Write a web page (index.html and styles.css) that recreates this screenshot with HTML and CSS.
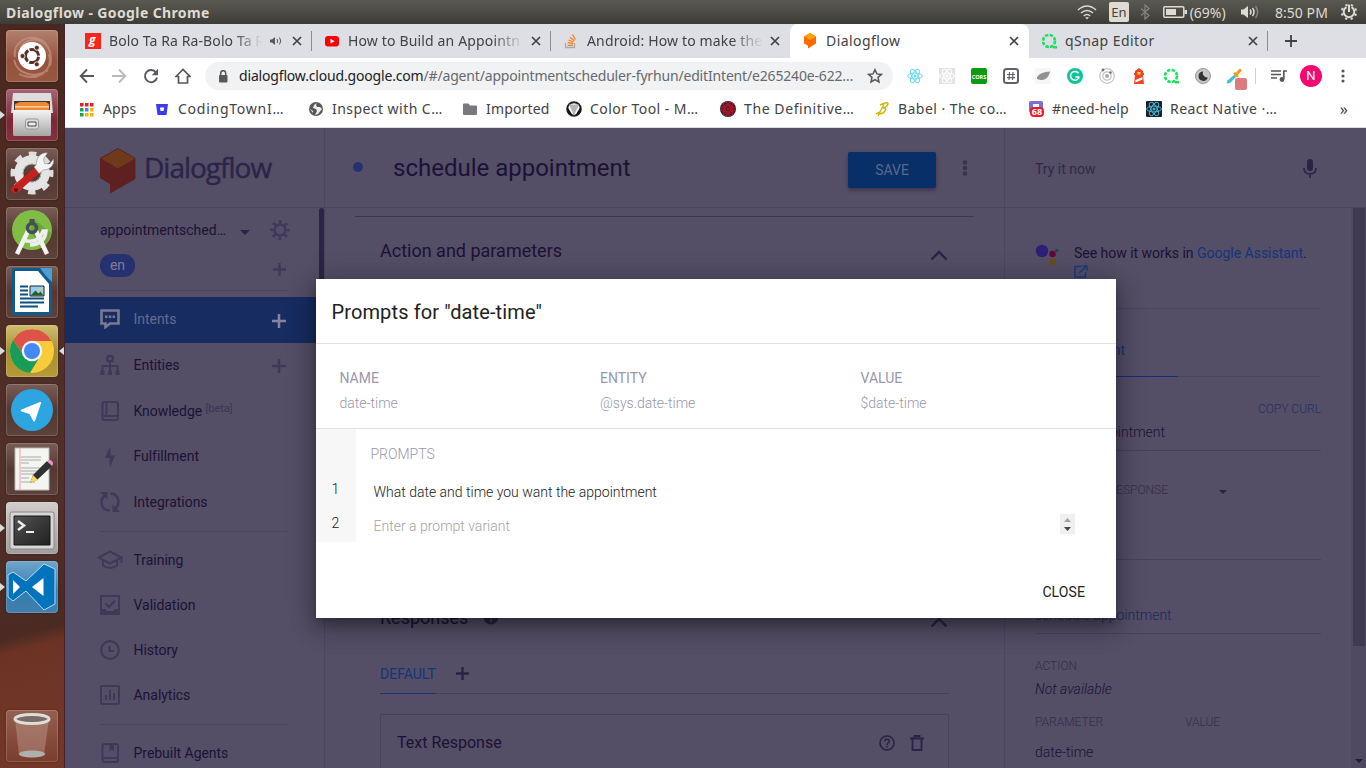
FILE: index.html
```html
<!DOCTYPE html>
<html lang="en">
<head>
<meta charset="utf-8">
<title>Dialogflow</title>
<link rel="stylesheet" href="styles.css">
</head>
<body>
<svg width="0" height="0" class="defs">
  <defs>
    <linearGradient id="metal" x1="0" y1="0" x2="0" y2="1"><stop offset="0" stop-color="#f4f4f4"/><stop offset="1" stop-color="#a5a5a5"/></linearGradient>
    <linearGradient id="screen" x1="0" y1="0" x2="1" y2="1"><stop offset="0" stop-color="#555"/><stop offset=".5" stop-color="#383838"/><stop offset="1" stop-color="#222"/></linearGradient>
    <symbol id="x" viewBox="0 0 10 10"><path d="M1 1l8 8M9 1L1 9" stroke="#3f4246" stroke-width="1.7" fill="none"/></symbol>
    <symbol id="react" viewBox="0 0 16 16"><g fill="none" stroke="currentColor" stroke-width="1"><ellipse cx="8" cy="8" rx="7.4" ry="2.9"/><ellipse cx="8" cy="8" rx="7.4" ry="2.9" transform="rotate(60 8 8)"/><ellipse cx="8" cy="8" rx="7.4" ry="2.9" transform="rotate(120 8 8)"/></g><circle cx="8" cy="8" r="1.5" fill="currentColor"/></symbol>
    <symbol id="qsnap" viewBox="0 0 16 16"><circle cx="8" cy="8" r="6" fill="none" stroke="#1ee05f" stroke-width="2.600" stroke-dasharray="3.400 1.300"/><path d="M11 13h5v2.500h-4z" fill="#1ee05f"/></symbol>
    <symbol id="plus" viewBox="0 0 14 14"><path d="M7 0v14M0 7h14" stroke="currentColor" stroke-width="2.500"/></symbol>
    <symbol id="chev" viewBox="0 0 18 11"><path d="M1.500 9.500L9 2l7.500 7.500" fill="none" stroke="currentColor" stroke-width="2.400"/></symbol>
  </defs>
</svg>

<header class="panel">
  <span class="panel-title">Dialogflow - Google Chrome</span>
  <div class="indicators">
    <svg class="i-wifi" width="20" height="16" viewBox="0 0 20 16" fill="none" stroke="#dfdbd2" stroke-width="1.600"><path d="M1 6Q10-2 19 6M4 9q6-5 12 0M6.800 11.800q3.200-2.600 6.400 0"/><path d="M8 13.200h4l-2 2.300z" fill="#dfdbd2" stroke="none"/></svg>
    <span class="lang">En</span>
    <svg class="i-bt" width="10" height="16" viewBox="0 0 10 16" fill="none" stroke="#85837b" stroke-width="1.300"><path d="M1 4.500l8 7-4 3.500V1l4 3.500-8 7"/></svg>
    <svg class="i-bat" width="24" height="14" viewBox="0 0 24 14"><rect x=".8" y="1.800" width="20" height="10.400" rx="1" fill="none" stroke="#dfdbd2" stroke-width="1.500"/><path d="M3 4h10v6H3zM21.500 5H24v4h-2.500z" fill="#dfdbd2"/></svg>
    <span class="bat">(69%)</span>
    <svg class="i-vol" width="20" height="16" viewBox="0 0 20 16"><path d="M1 5.500h2.500L8 2v12l-4.500-3.500H1z" fill="#dfdbd2"/><path d="M10 5.500q2 2.500 0 5M12.500 4q3 4 0 8" fill="none" stroke="#dfdbd2" stroke-width="1.500"/><path d="M15.500 2q4.300 6 0 12" fill="none" stroke="#85837b" stroke-width="1.500"/></svg>
    <span class="clock">8:50 PM</span>
    <svg class="i-gear" width="18" height="18" viewBox="0 0 18 18" fill="none" stroke="#dfdbd2"><path d="M11.500 4.200a5.300 5.300 0 1 1-5 0M9 1.500V9" stroke-width="2"/><circle cx="9" cy="9" r="7.200" stroke-width="2" stroke-dasharray="2.200 3.450" stroke-dashoffset="3.900"/></svg>
  </div>
</header>

<div class="desktop">
  <nav class="launcher">
    <div class="tile t-dash"><svg width="52" height="52" viewBox="0 0 52 52"><g fill="none" stroke="#c89582" opacity=".7"><path d="M9 27C6 8 30 2 40 14M43 24c5 20-16 28-30 20M14 18C24 2 50 10 44 36M8 30c4 16 22 18 34 10" stroke-width="2"/></g><circle cx="26" cy="26" r="14" fill="#fff"/><circle cx="26" cy="26" r="6.600" fill="none" stroke="#5a3024" stroke-width="3" stroke-dasharray="12.300 1.520" stroke-dashoffset="-.8"/><g fill="#5a3024" stroke="#fff" stroke-width=".8"><circle cx="16.500" cy="26" r="2.500"/><circle cx="30.800" cy="17.700" r="2.500"/><circle cx="30.800" cy="34.300" r="2.500"/></g></svg></div>
    <div class="tile t-files run"><svg width="52" height="52" viewBox="0 0 52 52"><path d="M7 4h38l2 20H5z" fill="#ddd"/><path d="M8 12h36v12H8z" fill="#3c3935"/><path d="M9 15l5-2h26l3 2v8H9z" fill="#ed8735"/><path d="M9 17h34v1.500H9z" fill="#ffd39c"/><rect x="7" y="21" width="38" height="26" rx="1.500" fill="url(#metal)"/><rect x="19.500" y="30" width="13" height="10" rx="2" fill="#ddd" stroke="#969696"/><path d="M22 33h8v4h-8z" fill="#eee" stroke="#444"/></svg></div>
    <div class="tile"><svg width="52" height="52" viewBox="0 0 52 52"><circle cx="26" cy="25" r="19" fill="none" stroke="#dedede" stroke-width="5" stroke-dasharray="7.500 7.420" stroke-dashoffset="3.700"/><circle cx="26" cy="25" r="13.500" fill="none" stroke="#e4e4e4" stroke-width="8.500"/><circle cx="26" cy="25" r="9" fill="none" stroke="#b4b4b4"/><path d="M6.500 44q-3-3 1-6.500L28 20l5 5.500L12 44q-3 2.500-5.500 0z" fill="#c4221f"/><path d="M28 19c3-2 2-4 3-7 1.500-5 6-8 10.500-7l-4 6 1 4.500 5 .5 4-5c1.500 6-4 11-10 11l-4.500 3.500z" fill="#f4f4f4" stroke="#888" stroke-width=".6"/><circle cx="10" cy="42" r="2" fill="#681313"/></svg></div>
    <div class="tile"><svg width="52" height="52" viewBox="0 0 52 52"><circle cx="26" cy="23" r="20" fill="#80bd45"/><path d="M28 12l17 14q-2 10-10 14L24 24z" fill="#6ba43b"/><path d="M22 24L11 47M30 24l11 23" stroke="#f3f3f3" stroke-width="4.500"/><path d="M17 33q15 5 20-9h3q-1 13-16 14" fill="none" stroke="#eee" stroke-width="3.500"/><circle cx="26" cy="21" r="4.500" fill="none" stroke="#455056" stroke-width="3.500"/><path d="M23.500 12h5v5h-5z" fill="#455056"/></svg></div>
    <div class="tile"><svg width="52" height="52" viewBox="0 0 52 52"><path d="M8 2h28l10 11v33q0 3-3 3H9q-3 0-3-3V4q0-2 2-2z" fill="#0f5a8f"/><path d="M34 2h12v14q-6-5-12-14z" fill="#4c9fd2"/><path d="M9 5h23l11 13v28H9z" fill="#fff"/><path d="M14 20.500h8M14 24.500h8M14 28.500h8M14 32.500h24M14 36.500h24M14 40.500h18" stroke="#0d4f80" stroke-width="1.800"/><path d="M24 20h14v10H24z" fill="#8fd0f2" stroke="#222"/><path d="M24.500 29.500l5-5 3 3 2-2 3 4z" fill="#315a2c"/><circle cx="34" cy="23" r="1.500" fill="#f5c542"/></svg></div>
    <div class="tile t-chrome run act"><svg width="52" height="52" viewBox="0 0 52 52"><circle cx="26" cy="26" r="22" fill="#f9cb38"/><path d="M7 15A22 22 0 0 1 45.500 16H26l-9 13z" fill="#dd5347"/><path d="M7 15a22 22 0 0 0 17 33l9-15-7 3-9-7z" fill="#179d58"/><circle cx="26" cy="26" r="10.300" fill="#f4f4f4"/><circle cx="26" cy="26" r="8" fill="#4488f4"/></svg></div>
    <div class="tile"><svg width="52" height="52" viewBox="0 0 52 52"><circle cx="26" cy="26" r="21" fill="#2ca5e0"/><path d="M15.500 25.500L34 18q1.500-.3 1 1.300L29 37q-.8 1.300-1.800 0L23.500 30l-8-2.500q-1.500-1 0-2z" fill="#fff"/></svg></div>
    <div class="tile"><svg width="52" height="52" viewBox="0 0 52 52"><path d="M9 5h34v42H9z" fill="#f4f4f1" stroke="#bbb"/><path d="M15 14h20M15 17h20M15 20h8M15 25h21M15 28h21M15 31h18M15 35h8M15 39h14" stroke="#aaa"/><path d="M14 5v42" stroke="#f0a0a0"/><path d="M24 40l3-8 14-14 5 5-15 14z" fill="#303030"/><path d="M24 40l3-8 5 5z" fill="#f2dc58"/><path d="M41 18l2-1q4 0 4 4l-1 2z" fill="#e895c5"/></svg></div>
    <div class="tile t-term run"><svg width="52" height="52" viewBox="0 0 52 52"><rect x="4" y="10" width="44" height="37" rx="2" fill="#d7d7d7" stroke="#888"/><path d="M8 14h36v29H8z" fill="url(#screen)" stroke="#171717"/><path d="M12 19l6 4.500-6 4.500" fill="none" stroke="#eee" stroke-width="2.500"/><path d="M20 30h8" stroke="#eee" stroke-width="2"/></svg></div>
    <div class="tile t-code run"><svg width="52" height="52" viewBox="0 0 52 52"><path d="M2 14l5-3 13 9L38 3l11 5v35l-11 6-18-19-13 10-5-4z" fill="#0073bd" stroke="#b9daf0"/><path d="M7 19l7 7-7 7zM37.500 17v18L26 26z" fill="#fff"/></svg></div>
    <div class="tile t-trash"><svg width="52" height="52" viewBox="0 0 52 52"><path d="M9 9h34l-5 36q-12 5-25 0z" fill="#c9a79c" opacity=".4"/><ellipse cx="26" cy="9" rx="17" ry="4.500" fill="#7a6b66" stroke="#deded9" stroke-width="3"/><ellipse cx="26" cy="44" rx="13" ry="3.500" fill="#aeb0ab"/></svg></div>
  </nav>

  <div class="browser">
    <div class="tabs">
      <div class="tab"><svg width="16" height="16" viewBox="0 0 16 16"><path d="M0 0h16v16H0z" fill="#f8251a"/><text x="4" y="11" class="gaana">g</text></svg><span class="tt fade short">Bolo Ta Ra Ra-Bolo Ta R</span><svg class="snd" width="12" height="10" viewBox="0 0 12 10"><path d="M0 3.500h2L5 1v8L2 6.500H0z" fill="#55585c"/><path d="M7 3q1.500 2 0 4M9.500 1.500q2.500 3.500 0 7" fill="none" stroke="#55585c"/></svg><svg class="x" width="10" height="10"><use href="#x"/></svg></div>
      <div class="tab"><svg width="16" height="16" viewBox="0 0 16 16"><rect x="1" y="3" width="14" height="10.500" rx="3" fill="#f00"/><path d="M6.500 5.800l4 2.400-4 2.400z" fill="#fff"/></svg><span class="tt fade">How to Build an Appointn</span><svg class="x" width="10" height="10"><use href="#x"/></svg></div>
      <div class="tab nosep"><svg width="16" height="16" viewBox="0 0 16 16" fill="none"><path d="M2.500 10v4.500h9V10" stroke="#aaa" stroke-width="1.300"/><path d="M4.500 12.300h5.500M4.700 9.700l5.500.8M5.500 7l5.200 2M7 4.200l4.500 3.500M9.500 1.500l3 5" stroke="#f48024" stroke-width="1.300"/></svg><span class="tt fade">Android: How to make the</span><svg class="x" width="10" height="10"><use href="#x"/></svg></div>
      <div class="tab active"><svg width="16" height="16" viewBox="0 0 16 16"><path d="M8 0l6 3.500v7L6 15.500V12.800L2 10.500v-7z" fill="#ff6a00"/><path d="M8 0l6 3.500L8 7 2 3.500z" fill="#ffa000"/></svg><span class="tt wide">Dialogflow</span><svg class="x" width="10" height="10"><use href="#x"/></svg></div>
      <div class="tab"><svg width="16" height="16"><use href="#qsnap"/></svg><span class="tt wide">qSnap Editor</span><svg class="x" width="10" height="10"><use href="#x"/></svg></div>
      <svg class="newtab" width="12" height="12" viewBox="0 0 12 12"><path d="M6 0v12M0 6h12" stroke="#3f4246" stroke-width="1.800"/></svg>
    </div>

    <div class="toolbar">
      <div class="navbtns">
        <svg width="16" height="16" viewBox="0 0 16 16" fill="none" stroke="#55585c" stroke-width="1.900"><path d="M15 8H2M8 1.500L1.700 8 8 14.500"/></svg>
        <svg width="16" height="16" viewBox="0 0 16 16" fill="none" stroke="#b9bbbd" stroke-width="1.900"><path d="M1 8h13M8 1.500L14.300 8 8 14.500"/></svg>
        <svg width="16" height="16" viewBox="0 0 16 16"><path d="M13 4.500A6.100 6.100 0 1 0 14 9.500" fill="none" stroke="#55585c" stroke-width="1.900"/><path d="M15 .8v6.400H8.800z" fill="#55585c"/></svg>
        <svg width="16" height="16" viewBox="0 0 16 16"><path d="M1 8.500L8 1.500l7 7h-2.500V15h-9V8.500z" fill="none" stroke="#55585c" stroke-width="1.700"/></svg>
      </div>
      <div class="omni">
        <svg width="10" height="13" viewBox="0 0 10 13"><rect x="1" y="5" width="8.500" height="7.500" rx="1" fill="#55585c"/><path d="M2.700 5V3.200a2.500 2.500 0 0 1 5 0V5" fill="none" stroke="#55585c" stroke-width="1.500"/></svg>
        <span class="url"><b>dialogflow.cloud.google.com</b>/#/agent/appointmentscheduler-fyrhun/editIntent/e265240e-622…</span>
        <svg width="16" height="16" viewBox="0 0 16 16"><path d="M8 1.700l1.900 4.200 4.600.5L11 9.400l1 4.600-4-2.400L4 14l1-4.600-3.500-3 4.600-.5z" fill="none" stroke="#55585c" stroke-width="1.500"/></svg>
      </div>
      <div class="exts">
        <svg class="cy" width="16" height="16"><use href="#react"/></svg>
        <svg class="wh" width="16" height="16"><path d="M0 0h16v16H0z" fill="#e3e3e3"/><use href="#react"/></svg>
        <svg width="16" height="16"><rect width="16" height="16" rx="2" fill="#0c9b12"/><text x="8" y="10.500" class="cors">CORS</text></svg>
        <svg width="16" height="16" fill="none"><rect x="1" y="1" width="14" height="14" rx="2.500" stroke="#606367" stroke-width="2"/><path d="M6.500 4L6 12M10 4l-.5 8M4 6.500h8M4 9.700h8" stroke="#606367" stroke-width="1.200"/></svg>
        <svg width="16" height="16"><path d="M0 0h16v16H0z" fill="#f6f6f6"/><path d="M2 9C5 5 9 4 15 3.500c-1 5-4 9-9 8.500-2 0-3-1-4-1z" fill="#919191"/></svg>
        <svg width="16" height="16"><circle cx="8" cy="8" r="8" fill="#11c39a"/><path d="M11.500 5.200A4.400 4.400 0 1 0 12 9.500M8.500 9H12.500" fill="none" stroke="#fff" stroke-width="1.500"/></svg>
        <svg width="16" height="16"><g fill="none" stroke="#c4c4c4" stroke-width="1.200"><circle cx="8" cy="8" r="7.300"/><circle cx="8" cy="8" r="4.200"/></g><circle cx="8" cy="8" r="2" fill="#aaa"/><circle cx="4" cy="2" r="1.400" fill="#777"/><circle cx="11.500" cy="4.500" r="1.300" fill="#777"/></svg>
        <svg width="16" height="16"><path d="M4 5V3l4-3 4 3v2h1v2h-1l1 9H3l1-9H3V5z" fill="#f4431f"/><path d="M6.500 4h3v2.500h-3z" fill="#ffe04b"/><path d="M4.500 12l7-3v2.500l-7 3z" fill="#fff"/></svg>
        <svg width="16" height="16"><use href="#qsnap"/></svg>
        <svg width="16" height="16"><circle cx="8" cy="8" r="7.500" fill="#c5c7c8" stroke="#999"/><path d="M8 3.500a4.700 4.700 0 1 0 4.800 6A4.500 4.500 0 0 1 8 3.500z" fill="#333"/></svg>
        <svg width="24" height="22" viewBox="0 0 24 22" class="picker"><path d="M3.500 15.500l1-3 7-6 2 2-6.500 6.500z" fill="#3fc0d8"/><path d="M10 5.500L12 4l1 .7L16 1q3-1 2.500 2L15 6.500l.8 1.200L14 9.500z" fill="#f69d17"/><rect x="12" y="10" width="12" height="12" rx="2" fill="#dd7c7f"/></svg>
      </div>
      <i class="vsep"></i>
      <svg class="plist" width="16" height="14" viewBox="0 0 16 14"><path d="M0 2h10M0 5.500h10M0 9h6" stroke="#55585c" stroke-width="1.600"/><path d="M12.800 1.200V10M12 2h4" stroke="#55585c" stroke-width="1.700"/><circle cx="11" cy="10.500" r="2.400" fill="#55585c"/></svg>
      <span class="avatar">N</span>
      <svg width="4" height="14" viewBox="0 0 4 14" fill="#55585c"><circle cx="2" cy="2" r="1.600"/><circle cx="2" cy="7" r="1.600"/><circle cx="2" cy="12" r="1.600"/></svg>
    </div>

    <div class="marks">
      <div class="mk w74"><svg width="16" height="16"><g><path d="M1 2h3.500v3.500H1zM6 2h3.500v3.500H6zM11 2h3.500v3.500H11z" fill="#ea1c1c"/><path d="M1 7h3.500v3.500H1z" fill="#19a05f"/><path d="M6 7h3.500v3.500H6z" fill="#4285f4"/><path d="M11 7h3.500v3.500H11zM6 12h3.500v3.500H6zM11 12h3.500v3.500H11z" fill="#f7b500"/><path d="M1 12h3.500v3.500H1z" fill="#19a05f"/></g></svg><span>Apps</span></div>
      <div class="mk w154 l8"><svg width="16" height="16"><path d="M2 3h12l-1.500 11h-9z" fill="#3a3cf0"/><path d="M6 6.500h4.200L9.500 10h-3z" fill="#fff"/></svg><span>CodingTownI…</span></div>
      <div class="mk w154 l5"><svg width="16" height="16"><circle cx="8" cy="8" r="7" fill="#55585c"/><path d="M9 2L6 4 5 7l3 1 1 2-2 4 3-1 4-5-2-2H9L8 4zM2 8l3 2v2z" fill="#fff" opacity=".9"/></svg><span>Inspect with C…</span></div>
      <div class="mk w104"><svg width="16" height="16"><path d="M1 3.500q0-1 1-1h4.500l1.500 2h6q1 0 1 1V13q0 1-1 1H2q-1 0-1-1z" fill="#77797c"/></svg><span>Imported</span></div>
      <div class="mk w154 l5"><svg width="16" height="16"><circle cx="8" cy="8" r="6.800" fill="#fff" stroke="#222" stroke-width="2"/><path d="M3 3.500h10l-5 11z" fill="#b5b5b5"/><path d="M1 5l6 10-5-3zM15 5L9 15l5-3z" fill="#111"/></svg><span>Color Tool - M…</span></div>
      <div class="mk w154 rd l6"><svg width="16" height="16"><circle cx="8" cy="8" r="8" fill="#3b2028"/><use href="#react"/><circle cx="8" cy="8" r="5" fill="none" stroke="#b5162b"/></svg><span>The Definitive…</span></div>
      <div class="mk w154 l5"><svg width="16" height="16" fill="none" stroke="#c9bb15" stroke-width="1.500"><path d="M4 15L10 3M6 4q8-4 8-1-1 3-5 4 4 0 2 3-2 3-7 3M2 13l4-2"/></svg><span>Babel · The co…</span></div>
      <div class="mk w118"><svg width="16" height="16"><rect x="1" y="0" width="14" height="12" rx="2" fill="#7a70d8"/><path d="M5 3h6v3H5z" fill="#fff"/><rect x="2" y="6" width="14" height="10" rx="4" fill="#ed1a2d"/><text x="9" y="14.300" class="b68">68</text></svg><span>#need-help</span></div>
      <div class="mk bl l5"><svg width="16" height="16"><rect width="16" height="16" rx="1" fill="#1d2127"/><use href="#react"/></svg><span>React Native ·…</span></div>
      <span class="more">»</span>
    </div>

    <div class="page">
      <aside class="side">
        <div class="brand">
          <svg width="36" height="46" viewBox="0 0 36 46"><path d="M18 0l17.500 10v21L10 45.500V36L0 30V10z" fill="#5f2020"/><path d="M18 1l17 9.500L18 20.500 1 10.500z" fill="#6e3a1b"/></svg>
          <span>Dialogflow</span>
        </div>
        <div class="agent">
          <span class="an">appointmentsched…</span><i class="caret"></i>
          <svg class="gear" width="20" height="20" viewBox="0 0 20 20" fill="none" stroke="#3f3959"><circle cx="10" cy="10" r="5.500" stroke-width="2.400"/><circle cx="10" cy="10" r="8.300" stroke-width="3.200" stroke-dasharray="2.600 3.920" stroke-dashoffset="1.300"/></svg>
        </div>
        <div class="langrow"><span class="pill">en</span><svg width="13" height="13" class="dim"><use href="#plus"/></svg></div>
        <i class="hr h1"></i>
        <div class="it on"><svg width="20" height="20" viewBox="0 0 20 20"><path d="M1.500 1.500h17v13H10L5.500 18v-3.500h-4z" fill="none" stroke="#7c7891" stroke-width="2.600"/><path d="M5 6.500h2.500V9H5zM8.800 6.500h2.500V9H8.800zM12.600 6.500H15V9h-2.400z" fill="#7c7891"/></svg><span>Intents</span><svg class="ad" width="14" height="14"><use href="#plus"/></svg></div>
        <div class="it"><svg width="20" height="20" viewBox="0 0 20 20" fill="none" stroke="currentColor"><rect x="7.200" y="1.200" width="5.600" height="5" rx="1" stroke-width="2.200"/><path d="M10 6v11M2.500 17v-6h15v6" stroke-width="1.800"/><path d="M.5 15.500h4V20h-4zM8 15.500h4V20H8zM15.500 15.500h4V20h-4z" fill="currentColor" stroke="none"/></svg><span>Entities</span><svg class="ad" width="14" height="14"><use href="#plus"/></svg></div>
        <div class="it"><svg width="20" height="20" viewBox="0 0 20 20" fill="none" stroke="currentColor" stroke-width="2"><rect x="2.500" y="1" width="15.500" height="18" rx="2"/><path d="M6.500 1v14M2.500 15H18"/></svg><span>Knowledge <small>[beta]</small></span></div>
        <div class="it"><svg width="20" height="20" viewBox="0 0 20 20"><path d="M10 0L5 11h4.500L10 20l5-11.500h-4.300z" fill="currentColor"/></svg><span>Fulfillment</span></div>
        <div class="it"><svg width="20" height="20" viewBox="0 0 20 20" fill="none" stroke="currentColor" stroke-width="2.400"><path d="M9.500 18.500C1 18 -1 8 5 3.500M10.500 1.500C19 2 21 12 15 16.500"/><path d="M0 0h7.500v7.500zM20 20h-7.500v-7.500z" fill="currentColor" stroke="none"/></svg><span>Integrations</span></div>
        <i class="hr h2"></i>
        <div class="it b"><svg class="cap" width="26" height="20" viewBox="0 0 26 20" fill="none" stroke="currentColor" stroke-width="2"><path d="M13 1.500L1.500 7.500 13 13.500l11.500-6zM24.500 7v6M6 10v5.500q7 5 14 0V10"/></svg><span>Training</span></div>
        <div class="it b"><svg width="20" height="20" viewBox="0 0 20 20"><path d="M0 0h20v20H0zM2 2v12h4v2h8v-2h4V2z" fill="currentColor" fill-rule="evenodd"/><path d="M5.500 8.500L9 12l6-6.500" fill="none" stroke="currentColor" stroke-width="2"/></svg><span>Validation</span></div>
        <div class="it b"><svg width="20" height="20" viewBox="0 0 20 20" fill="none" stroke="currentColor" stroke-width="2.200"><circle cx="10" cy="10" r="8.800"/><path d="M9.500 6v5H14"/></svg><span>History</span></div>
        <div class="it b"><svg width="20" height="20" viewBox="0 0 20 20" fill="none" stroke="currentColor" stroke-width="2"><rect x="1" y="1" width="18" height="18" rx="1"/><path d="M6 10v5M10 5v10M14 8v7"/></svg><span>Analytics</span></div>
        <i class="hr h3"></i>
        <div class="it c"><svg width="20" height="20" viewBox="0 0 20 20" fill="none" stroke="currentColor" stroke-width="2"><rect x="2.500" y="1" width="15.500" height="18" rx="2"/><path d="M2.500 15H18"/><path d="M9.500 1h4.500v7.500l-2.200-2-2.300 2z" fill="currentColor" stroke="none"/></svg><span>Prebuilt Agents</span></div>
        <i class="thumb"></i>
      </aside>

      <main class="main">
        <div class="mhead"><i class="dot"></i><h1>schedule appointment</h1><span class="save">SAVE</span><svg width="6" height="16" viewBox="0 0 6 16" fill="#38324f"><circle cx="3" cy="2.500" r="2.200"/><circle cx="3" cy="8" r="2.200"/><circle cx="3" cy="13.500" r="2.200"/></svg></div>
        <div class="mbody">
          <i class="rule"></i>
          <div class="sec"><h2>Action and parameters</h2><svg width="18" height="11"><use href="#chev"/></svg></div>
          <div class="sec resp"><h2>Responses</h2><svg class="info" width="16" height="16"><circle cx="8" cy="8" r="7.500" fill="#2a2347"/><path d="M7 4h2v5H7zM7 10.500h2v2H7z" fill="#544e66"/></svg><svg width="18" height="11"><use href="#chev"/></svg></div>
          <div class="deftabs"><span>DEFAULT</span><svg width="13" height="13"><use href="#plus"/></svg></div>
          <div class="card"><span>Text Response</span>
            <svg width="16" height="16" fill="none" stroke="#2a2347"><circle cx="8" cy="8" r="7" stroke-width="1.600"/><path d="M5.800 6.500q0-2.300 2.200-2.300t2.200 2q0 1.200-1.300 1.900Q8 8.500 8 10M8 11v1.500" stroke-width="1.500"/></svg>
            <svg width="14" height="16" viewBox="0 0 14 16" fill="none" stroke="#2a2347" stroke-width="1.800"><path d="M2.500 4v11h9V4M0 3.500h14M4.500 3V1h5v2"/></svg>
          </div>
        </div>
      </main>

      <section class="try">
        <div class="thead"><span>Try it now</span><svg width="14" height="20" viewBox="0 0 14 20"><rect x="4" y="0" width="6" height="12" rx="3" fill="#2a2347"/><path d="M1 9q0 6 6 6t6-6M7 15v4" fill="none" stroke="#2a2347" stroke-width="1.600"/></svg></div>
        <div class="tbody">
          <div class="tcol">
            <div class="ga"><svg width="24" height="22" viewBox="0 0 24 22"><circle cx="7" cy="7" r="6.200" fill="#2b1f78"/><circle cx="17.500" cy="10" r="3.200" fill="#5f0838"/><circle cx="21.800" cy="6.500" r="1.800" fill="#0e4f4b"/><circle cx="17.500" cy="17.500" r="3.600" fill="#6a4a21"/></svg>
              <p>See how it works in <a>Google Assistant</a>.<br><svg width="14" height="13" viewBox="0 0 14 13" fill="none" stroke="#183a82" stroke-width="1.500"><path d="M7.500 1.500H1v10.500h10.500V7.500M5 8l7-6.500M8.500 1H13v4.500"/></svg></p></div>
            <div class="agtab"><span>Agent</span></div>
            <div class="usays"><div class="cc">COPY CURL</div><div class="q">set an appointment</div></div>
            <div class="dr"><span>DEFAULT RESPONSE</span><i class="caret sm"></i></div>
            <div class="intent">schedule appointment</div>
            <div class="lab">ACTION</div>
            <div class="na">Not available</div>
            <div class="lab two"><span>PARAMETER</span><span>VALUE</span></div>
            <div class="dt">date-time</div>
          </div>
          <div class="sb"><i></i><b></b></div>
        </div>
      </section>

      <div class="modal">
        <h3>Prompts for "date-time"</h3>
        <div class="cols"><div>NAME<em>date-time</em></div><div>ENTITY<em>@sys.date-time</em></div><div>VALUE<em>$date-time</em></div></div>
        <div class="prompts">
          <div class="gut"><span>1</span><span>2</span></div>
          <div class="plines"><div class="ph">PROMPTS</div><div class="p1">What date and time you want the appointment</div><div class="p2"><span>Enter a prompt variant</span><svg width="15" height="20"><path d="M0 0h15v20H0z" fill="#f0f0f0"/><path d="M4 8l3.500-4L11 8z" fill="#a2a2a2"/><path d="M4 13l3.500 4 3.500-4z" fill="#454545"/></svg></div></div>
        </div>
        <div class="foot">CLOSE</div>
      </div>
    </div>
  </div>
</div>
</body>
</html>
```
FILE: styles.css
```css
* { box-sizing: border-box; margin: 0; padding: 0; }
body { width: 1366px; height: 768px; overflow: hidden; font-family: "Noto Sans", "Open Sans", sans-serif; font-size: 14px; }
svg { display: block; flex: none; }
i, em { font-style: normal; }
.defs { position: absolute; }

.panel { height: 24px; display: flex; align-items: center; justify-content: space-between; background: linear-gradient(#5b5a51, #3c3b37); color: #dfdbd2; padding: 0 8px 0 6px; }
.panel-title { font-weight: 700; font-size: 14px; letter-spacing: .38px; }
.indicators { display: flex; align-items: center; width: 281px; font-size: 14px; white-space: nowrap; }
.lang { width: 20px; height: 20px; margin-left: 12px; background: #dfdbd2; color: #45433d; border-radius: 2px; font-size: 13px; line-height: 20px; text-align: center; }
.i-bt { margin-left: 11px; }
.i-bat { margin-left: 13px; }
.bat { margin-left: 3px; width: 39px; font-size: 14px; letter-spacing: 0; }
.i-vol { margin-left: 12px; }
.clock { margin-left: 15px; width: 54px; letter-spacing: .05px; }
.i-gear { margin-left: 12px; }

.desktop { display: flex; height: 744px; }
.launcher { position: relative; z-index: 1; width: 65px; flex: none; display: flex; flex-direction: column; gap: 7px; padding: 6px 6px 6px; background: linear-gradient(165deg, #4a281f 0, #51302a 60%, #4a2a22 81%, #6c3325 83%, #74382a 100%); border-right: 1px solid #40242a; }
.tile { position: relative; width: 52px; height: 52px; flex: none; border-radius: 4px; background: linear-gradient(#795d56, #543831 50%, #5d423b); box-shadow: inset 0 0 0 1px rgba(255,255,255,.17), 0 0 2px rgba(0,0,0,.4); }
.t-dash { background: linear-gradient(#b2816f, #94523d 60%, #9a5943); }
.t-files { background: linear-gradient(#a76574, #7c2636 60%, #86313f); }
.t-chrome { background: linear-gradient(#cfbe70, #a78e31 50%, #b59b3a); }
.t-term { background: linear-gradient(#d2cdcc, #a29d9c); }
.t-code { background: linear-gradient(#70a5cb, #347cae 60%, #427fae); }
.t-trash { margin-top: auto; background: linear-gradient(#965f50, #7a3c2d); }
.run::before { content: ""; position: absolute; left: -6px; top: 22px; border: 4px solid transparent; border-left: 5px solid #dcdcdc; border-right: 0; }
.act::after { content: ""; position: absolute; right: -6px; top: 22px; border: 4px solid transparent; border-right: 5px solid #dcdcdc; border-left: 0; }

.browser { flex: 1; display: flex; flex-direction: column; min-width: 0; background: #fff; }
.tabs { height: 34px; flex: none; display: flex; align-items: center; padding-left: 8px; color: #3f4246; background: #dedfe4; }
.tab { width: 239px; height: 34px; flex: none; display: flex; align-items: center; padding-left: 12px; position: relative; }
.tab::after { content: ""; position: absolute; right: 0; top: 7px; width: 1px; height: 20px; background: #8b8d91; }
.nosep::after, .active::after { display: none; }
.active { background: #fff; border-radius: 8px 8px 0 0; }
.tt { margin: -2px 0 0 8px; width: 176px; white-space: nowrap; font-size: 14px; letter-spacing: .15px; }
.wide { letter-spacing: .45px; }
.short { width: 153px; margin-right: 8px; letter-spacing: .1px; }
.fade { -webkit-mask-image: linear-gradient(90deg, #000 82%, transparent); mask-image: linear-gradient(90deg, #000 82%, transparent); }
.tab .x { margin-left: 7px; }
.tab .snd + .x { margin-left: 10px; }
.newtab { margin-left: 17px; }
.gaana { font: italic bold 12px "Open Sans", sans-serif; fill: #fff; }

.toolbar { height: 36px; flex: none; display: flex; align-items: center; padding-left: 14px; }
.navbtns { display: flex; gap: 16px; width: 126px; }
.omni { width: 688px; height: 28px; border-radius: 14px; background: #f0f2f4; display: flex; align-items: center; padding-left: 13px; }
.url { margin: -2px 0 0 11px; width: 628px; white-space: nowrap; color: #66696d; font-size: 14px; letter-spacing: -.17px; }
.url b { font-weight: 400; color: #202124; }
.exts { display: flex; gap: 16px; margin-left: 14px; height: 16px; }
.picker { margin-left: -4px; }
.cy { color: #66daf5; } .wh { color: #fff; } .rd svg { color: #b5162b; } .bl svg { color: #45b6d4; }
.cors { font: bold 5.500px "Noto Sans", sans-serif; fill: #fff; text-anchor: middle; }
.vsep { width: 1px; height: 16px; background: #cfcfcf; margin-left: 8px; }
.plist { margin-left: 15px; }
.avatar { width: 22px; height: 22px; border-radius: 50%; margin: 0 19px 0 13px; background: #f5086f; color: #fff; text-align: center; font: 13px/22px Roboto, sans-serif; }

.marks { height: 34px; flex: none; display: flex; align-items: center; border-bottom: 1px solid #dadce0; padding: 0 18px 4px 14px; color: #3f4246; }
.mk { display: flex; align-items: center; gap: 8px; flex: none; font-size: 14px; letter-spacing: .15px; white-space: nowrap; }
.l5 { letter-spacing: .45px; } .l6 { letter-spacing: .6px; } .l8 { letter-spacing: .75px; }
.w74 { width: 75px; } .w154 { width: 154px; } .w104 { width: 104px; } .w118 { width: 118px; }
.more { margin-left: auto; font-size: 16px; }
.b68 { font: bold 9px "Noto Sans", sans-serif; fill: #fff; text-anchor: middle; }

.page { position: relative; height: 640px; display: flex; background: #544e66; font-family: Roboto, sans-serif; color: #1b1236; }
.side { position: relative; width: 260px; flex: none; border-right: 1px solid #4b4560; display: flex; flex-direction: column; }
.brand { height: 80px; flex: none; border-bottom: 1px solid #4b4560; display: flex; align-items: center; padding: 7px 0 0 35px; font: 28px "Open Sans", sans-serif; letter-spacing: -1px; color: #2b2449; }
.brand span { margin: -9px 0 0 8px; -webkit-text-stroke: .4px #2b2449; }
.agent { height: 44px; display: flex; align-items: center; padding-left: 35px; font-size: 14px; flex: none; }
.an { width: 140px; }
.caret { border: 5px solid transparent; border-top-color: #2b2449; border-bottom: 0; margin-top: 4px; }
.gear { margin-left: 20px; }
.langrow { height: 38px; flex: none; display: flex; justify-content: space-between; padding: 2px 38px 0 35px; color: #3f3959; }
.langrow svg { margin-top: 9px; }
.pill { width: 35px; height: 23px; border-radius: 11px; background: #263270; color: #807b98; text-align: center; line-height: 23px; font-size: 14px; }
.hr { display: block; height: 1px; flex: none; margin: 0 36px 0 35px; background: #4a4460; }
.h1 { margin-bottom: 6px; } .h2 { margin-top: 6px; margin-bottom: 6px; } .h3 { margin-top: 6px; margin-bottom: 6px; }
.it { height: 45.600px; flex: none; display: flex; align-items: center; padding-left: 35px; color: #3f3959; font-size: 14px; letter-spacing: -.03px; }
.it span { color: #1b1236; margin-left: 13.500px; width: 138.500px; margin-top: -1px; white-space: nowrap; }
.it.on { background: #172c60; color: #8783a0; }
.it.on > svg { margin-top: -1px; }
.it.on span { color: #68698f; margin-top: -2px; }
.it.b { height: 45px; }
.it .cap { margin: 0 -3px; }
.it small { font-size: 11px; color: #3b3556; vertical-align: 4px; letter-spacing: -.1px; }
.it .ad, .it.on .ad { margin-top: 2px; }
.it.c { height: 45px; }
.thumb { position: absolute; right: 0; top: 80px; width: 5px; height: 190px; border-radius: 3px 3px 0 0; background: #2b2444; }

.main { width: 680px; flex: none; border-right: 1px solid #4b4560; }
.mhead { height: 80px; border-bottom: 1px solid #4b4560; display: flex; align-items: center; padding-left: 28px; }
.dot { width: 10px; height: 10px; border-radius: 50%; background: #263270; margin-top: -2px; }
h1 { font-size: 24px; font-weight: 400; margin-left: 30px; width: 455px; }
.save { width: 88px; height: 36px; border-radius: 2px; background: #082f67; color: #5d678c; line-height: 36px; text-align: center; font-size: 14px; box-shadow: 0 2px 4px rgba(20,10,40,.4); margin: 5px 25.500px 0 0; }
.rule { display: block; height: 1px; background: #3c3654; margin: 8px 30px 0; }
.sec { display: flex; align-items: center; justify-content: space-between; height: 68px; padding: 0 56px 2px 55px; }
.sec > svg { margin-top: 10px; color: #2a2347; }
h2 { font-size: 18px; font-weight: 400; }
.resp { margin-top: 300px; padding-bottom: 4px; }
.resp .info { margin: 0 auto 0 15px; }
.deftabs { height: 41px; margin: 0 55px; border-bottom: 1px solid #474160; display: flex; gap: 20.500px; color: #2a2347; }
.deftabs span { height: 41px; line-height: 42px; color: #12357c; border-bottom: 1px solid #12357c; }
.deftabs svg { margin-top: 14px; }
.card { margin: 20px 55px 0; border: 1px solid #474160; height: 60px; display: flex; align-items: center; font-size: 16px; padding: 0 24px 3px 16px; }
.card span { flex: 1; }
.card svg { margin-left: 16px; }
.card svg + svg { margin-left: 15px; }

.try { flex: 1; min-width: 0; }
.thead { height: 80px; border-bottom: 1px solid #4b4560; display: flex; align-items: center; justify-content: space-between; padding: 3px 49px 0 30px; color: #30294a; font-size: 14px; }
.tbody { display: flex; height: 560px; overflow: hidden; }
.tcol { width: 316px; padding-left: 30px; font-size: 14px; }
.ga { display: flex; gap: 15px; height: 101px; padding-top: 36px; border-bottom: 1px solid #4a4460; }
.ga p { line-height: 19px; white-space: nowrap; letter-spacing: -.02px; }
.ga p svg { margin-top: 2px; }
.ga a { color: #12357c; }
.agtab { height: 68px; border-bottom: 1px solid #4a4460; }
.agtab span { display: block; width: 143px; height: 68px; border-bottom: 1px solid #0e2f80; text-align: right; padding: 33px 53px 0 0; color: #12357c; }
.usays { height: 74px; border-bottom: 1px solid #474160; }
.cc { text-align: right; color: #243066; font-size: 12px; line-height: 14px; padding-top: 25px; font-weight: 300; }
.q { width: 130px; text-align: right; padding-top: 8px; font-weight: 300; white-space: nowrap; }
.dr { height: 109px; border-bottom: 1px solid #474160; display: flex; color: #342d50; font-size: 12px; line-height: 14px; padding-top: 32px; font-weight: 300; }
.dr span { width: 133px; text-align: right; white-space: nowrap; }
.caret.sm { border-width: 4px 4px 0; margin: 7px 0 0 51px; height: 0; border-top-color: #2a2347; }
.intent { height: 74px; border-bottom: 1px solid #474160; color: #1c2863; padding-top: 47px; font-weight: 300; }
.lab { color: #342d50; font-size: 12px; line-height: 14px; padding-top: 25px; font-weight: 300; }
.na { font-style: italic; font-weight: 300; line-height: 18px; padding-top: 7px; }
.two { display: flex; padding-top: 17px; }
.two span { width: 150px; flex: none; }
.dt { font-weight: 300; padding-top: 15px; }
.sb { width: 15px; margin-left: auto; background: #4f4962; display: flex; flex-direction: column; justify-content: space-between; align-items: center; padding-bottom: 5px; }
.sb i { width: 12px; height: 438px; background: #403954; }
.sb b { border: 4px solid transparent; border-top-color: #211a3b; border-bottom: 0; }

.modal { position: absolute; left: 251px; top: 151px; width: 800px; height: 339px; background: #fff; box-shadow: 0 7px 9px rgba(0,0,0,.2), 0 10px 24px 2px rgba(0,0,0,.2), 0 2px 28px 2px rgba(0,0,0,.16); color: #212121; }
h3 { height: 65px; border-bottom: 1px solid #e0e0e0; font-size: 20px; font-weight: 400; line-height: 66px; padding-left: 15.500px; letter-spacing: .12px; }
.cols { height: 85px; border-bottom: 1px solid #e0e0e0; display: grid; grid-template-columns: 260.500px 260.500px 1fr; padding: 22px 0 0 23.500px; color: #9997ab; line-height: 25px; }
.cols em { display: block; font-weight: 300; }
.prompts { display: flex; height: 113px; }
.gut { width: 40px; background: #f7f7f7; padding: 43px 0 0 15.500px; font-weight: 300; }
.gut span { display: block; line-height: 34px; }
.plines { flex: 1; font-weight: 300; }
.ph { color: #9997ab; padding: 16px 0 0 14.500px; line-height: 18px; }
.p1 { padding: 20px 0 0 17.500px; line-height: 18px; }
.p2 { display: flex; justify-content: space-between; padding: 13px 41px 0 17.500px; color: #a3a3a3; }
.p2 span { line-height: 25px; }
.foot { text-align: right; padding: 42px 31px 0 0; line-height: 16px; letter-spacing: .1px; }
```
